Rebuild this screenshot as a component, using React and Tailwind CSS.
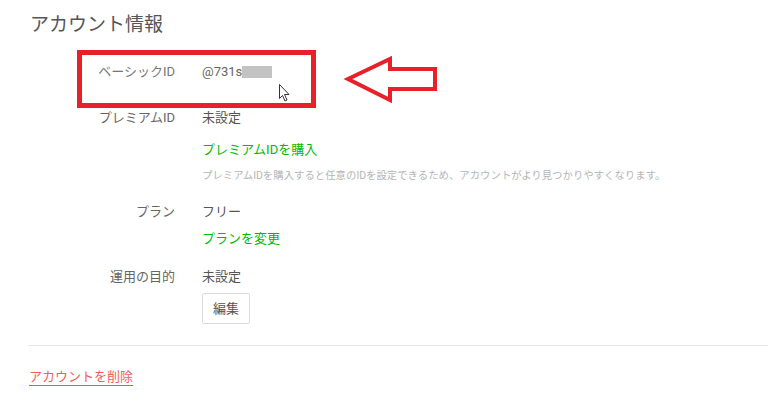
export default function App() {
  const font = { fontFamily: '"Roboto", "Noto Sans CJK JP", sans-serif' };
  return (
    <div className="relative w-[768px] h-[408px] bg-white overflow-hidden" style={font}>
      <h1 className="pt-[12px] pl-[30px] text-[19px] leading-[26px] text-[#555] font-normal">アカウント情報</h1>

      <div className="pl-[78px] text-[13px] leading-[18px]">
        <div className="flex mt-[25px]">
          <div className="w-[97px] text-right text-[#777]">ベーシックID</div>
          <div className="ml-[27px] flex items-center text-[#666]">
            <span>@731s</span>
            <span className="inline-block w-[30px] h-[12px] bg-[#c3c3c3]"></span>
          </div>
        </div>

        <div className="flex mt-[28px]">
          <div className="w-[97px] text-right text-[#666]">プレミアムID</div>
          <div className="ml-[27px] flex flex-col">
            <span className="text-[#555]">未設定</span>
            <span className="mt-[14px] text-[#00b900]">プレミアムIDを購入</span>
            <span className="mt-[10px] text-[10.4px] leading-[14px] text-[#b5b5b5] whitespace-nowrap">プレミアムIDを購入すると任意のIDを設定できるため、アカウントがより見つかりやすくなります。</span>
          </div>
        </div>

        <div className="flex mt-[20px]">
          <div className="w-[97px] text-right text-[#666]">プラン</div>
          <div className="ml-[27px] flex flex-col">
            <span className="text-[#555]">フリー</span>
            <span className="mt-[9px] text-[#00b900]">プランを変更</span>
          </div>
        </div>

        <div className="flex mt-[20px]">
          <div className="w-[97px] text-right text-[#666]">運用の目的</div>
          <div className="ml-[27px] flex flex-col items-start">
            <span className="text-[#555]">未設定</span>
            <button className="mt-[7px] w-[48px] h-[31px] border border-[#dcdcdc] rounded-[2px] bg-white text-[#555] text-[13px]">編集</button>
          </div>
        </div>
      </div>

      <div className="mt-[21px] ml-[28px] h-px bg-[#e6e6e6]"></div>

      <div className="mt-[22px] pl-[29px] text-[13px] leading-[18px]">
        <span className="text-[#f06060] underline decoration-[#f05050] underline-offset-[4px]">アカウントを削除</span>
      </div>

      {/* annotation box */}
      <div className="absolute left-[77px] top-[50px] w-[239px] h-[58px] border-[5px] border-[#e8202a]"></div>

      {/* annotation arrow */}
      <svg className="absolute left-0 top-0" width="768" height="408" viewBox="0 0 768 408">
        <polygon
          points="348,79 390,59 390,69 435,69 435,89 390,89 390,100"
          fill="none"
          stroke="#e8202a"
          strokeWidth="4"
          strokeLinejoin="miter"
        />
        {/* cursor */}
        <path
          d="M279.5,84.5 L279.5,98.5 L282.5,95.5 L285,101 L287,100 L284.5,94.5 L289,94.5 Z"
          fill="#fff"
          stroke="#333"
          strokeWidth="1"
          strokeLinejoin="round"
        />
      </svg>
    </div>
  );
}
